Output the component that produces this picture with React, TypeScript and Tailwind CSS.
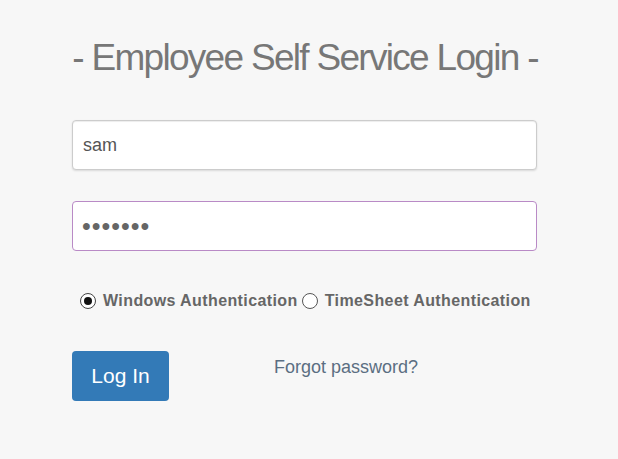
import React, { useState } from 'react';

export default function App() {
  const [user, setUser] = useState('sam');
  const [pass, setPass] = useState('1234567');
  const [auth, setAuth] = useState<'windows' | 'timesheet'>('windows');

  return (
    <div className="min-h-[459px] w-full bg-[#f7f7f7] font-['Liberation_Sans',Arial,sans-serif]">
      <div className="w-[466px] ml-[72px] pt-[36px]">
        <h1 className="whitespace-nowrap text-center text-[37px] leading-[44px] tracking-[-1.7px] text-[#777]">
          - Employee Self Service Login -
        </h1>

        <input
          type="text"
          value={user}
          onChange={(e) => setUser(e.target.value)}
          className="mt-[40px] block w-[465px] h-[50px] px-[10px] rounded-[4px] border border-[#cccccc] bg-white text-[18px] text-[#555] shadow-[inset_0_1px_1px_rgba(0,0,0,0.075),0_1px_2px_rgba(0,0,0,0.12)] outline-none"
        />
        <input
          type="password"
          value={pass}
          onChange={(e) => setPass(e.target.value)}
          className="mt-[31px] block w-[465px] h-[50px] px-[9px] rounded-[4px] border border-[#b98ac6] bg-white text-[25px] text-[#666] tracking-[1px] outline-none"
        />

        <div className="mt-[38px] flex items-center pl-[8px] text-[16px] tracking-[0.4px] font-bold text-[#666]">
          <label className="flex items-center cursor-pointer">
            <input
              type="radio"
              name="auth"
              checked={auth === 'windows'}
              onChange={() => setAuth('windows')}
              className="sr-only"
            />
            <span className="w-[16px] h-[16px] rounded-full border-[1.5px] border-[#444] bg-white flex items-center justify-center">
              {auth === 'windows' && <span className="w-[8px] h-[8px] rounded-full bg-[#111]" />}
            </span>
            <span className="ml-[7px]">Windows Authentication</span>
          </label>
          <label className="flex items-center cursor-pointer ml-[4px]">
            <input
              type="radio"
              name="auth"
              checked={auth === 'timesheet'}
              onChange={() => setAuth('timesheet')}
              className="sr-only"
            />
            <span className="w-[16px] h-[16px] rounded-full border-[1.5px] border-[#555] bg-white flex items-center justify-center">
              {auth === 'timesheet' && <span className="w-[8px] h-[8px] rounded-full bg-[#111]" />}
            </span>
            <span className="ml-[7px]">TimeSheet Authentication</span>
          </label>
        </div>

        <div className="mt-[38px] flex items-start">
          <button className="w-[97px] h-[50px] rounded-[4px] bg-[#337ab7] text-white text-[21px]">
            Log In
          </button>
          <a href="#" className="ml-[105px] mt-[3px] text-[18px] text-[#5b6e82]">
            Forgot password?
          </a>
        </div>
      </div>
    </div>
  );
}
